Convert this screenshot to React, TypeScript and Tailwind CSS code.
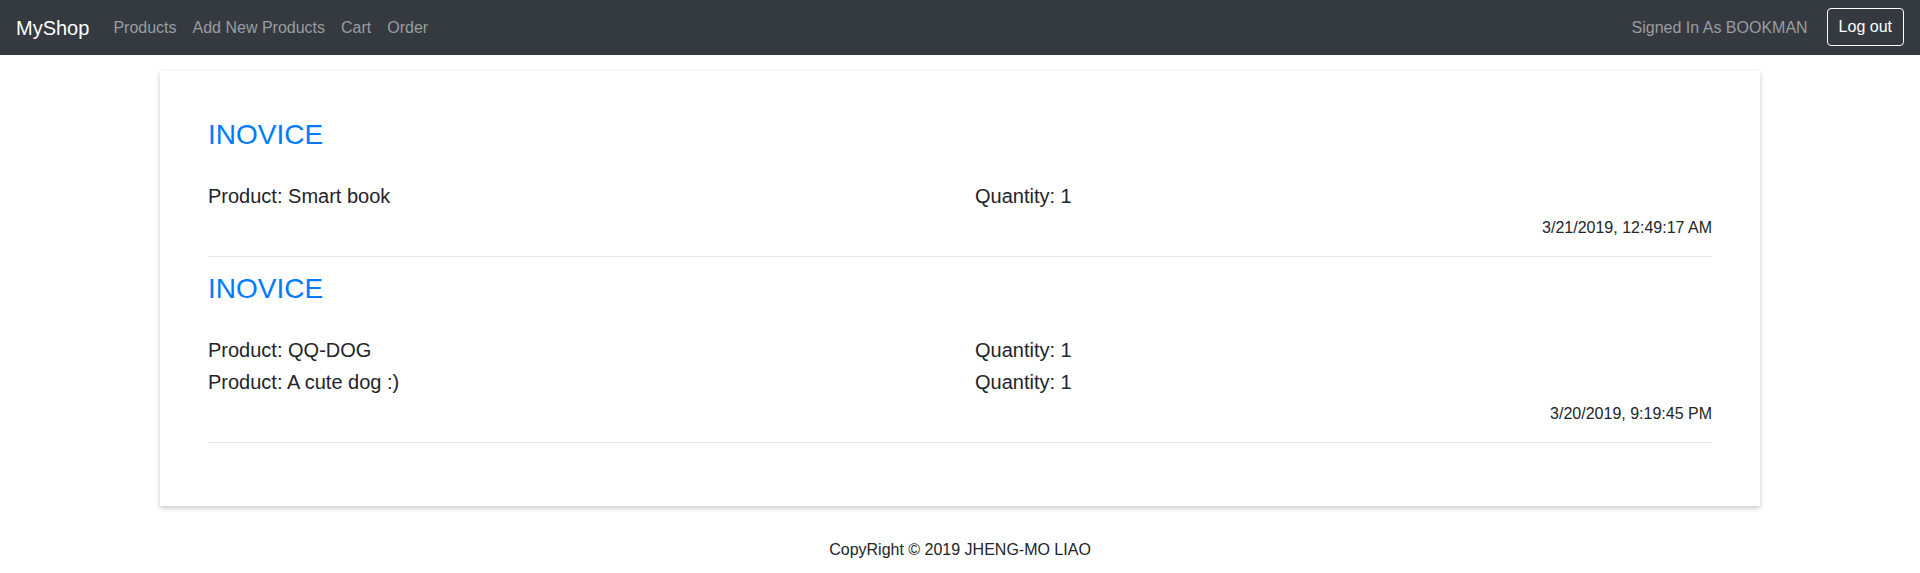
const orders = [
  {
    items: [{ name: 'Smart book', qty: 1 }],
    date: '3/21/2019, 12:49:17 AM',
  },
  {
    items: [
      { name: 'QQ-DOG', qty: 1 },
      { name: 'A cute dog :)', qty: 1 },
    ],
    date: '3/20/2019, 9:19:45 PM',
  },
];

function Navbar() {
  return (
    <nav className="h-[55px] bg-[#343a40] flex items-center justify-between px-4">
      <div className="flex items-center">
        <span className="text-[20px] leading-[30px] text-white mr-4">MyShop</span>
        {['Products', 'Add New Products', 'Cart', 'Order'].map((l) => (
          <a key={l} className="px-2 text-base leading-6 text-[#9a9da0] cursor-pointer">
            {l}
          </a>
        ))}
      </div>
      <div className="flex items-center">
        <span className="text-base leading-6 text-[#9a9da0] mr-[19px]">Signed In As BOOKMAN</span>
        <button className="h-[38px] px-[11px] border border-white rounded text-white text-base leading-6 mb-[2px]">
          Log out
        </button>
      </div>
    </nav>
  );
}

export default function App() {
  return (
    <div className="min-h-[573px] bg-white text-[#212529] font-['Liberation_Sans',Arial,sans-serif]">
      <Navbar />

      <div className="mx-[160px] mt-4 bg-white shadow-[0_2px_5px_rgba(0,0,0,0.22)] px-12 pt-[47px] pb-[63px]">
        {orders.map((o, i) => (
          <div key={i} className={i > 0 ? 'mt-[15px]' : ''}>
            <h3 className="text-[28px] leading-[34px] font-normal text-[#007bff]">INOVICE</h3>
            <div className="mt-7">
              {o.items.map((it, j) => (
                <div key={j} className="grid grid-cols-[767px_1fr] text-[20px] leading-8">
                  <span>Product: {it.name}</span>
                  <span>Quantity: {it.qty}</span>
                </div>
              ))}
            </div>
            <div className="mt-1 text-right text-base leading-6">{o.date}</div>
            <hr className="mt-4 border-0 border-t border-[#e6e6e6]" />
          </div>
        ))}
      </div>

      <footer className="mt-8 text-center text-base leading-6">
        CopyRight © 2019 JHENG-MO LIAO
      </footer>
    </div>
  );
}
